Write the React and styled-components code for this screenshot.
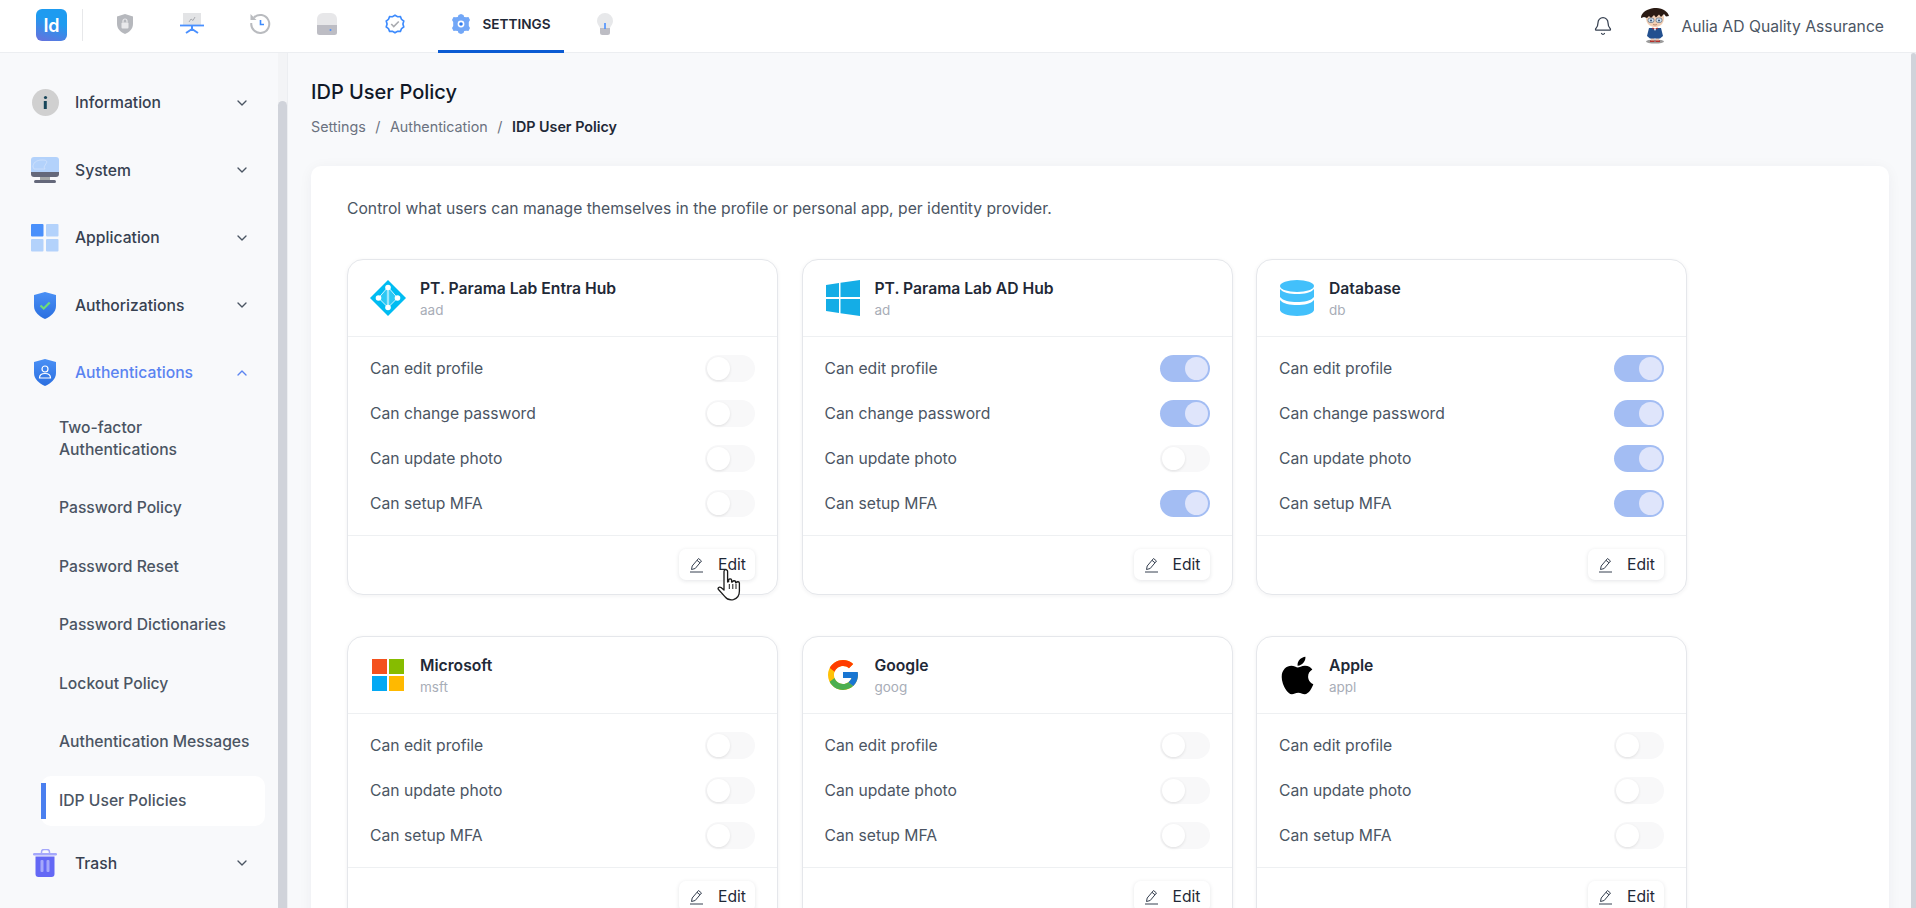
import React from "react";
import styled, { createGlobalStyle } from "styled-components";
import { Bell, ChevronDown, ChevronUp } from "lucide-react";
import { FcGoogle } from "react-icons/fc";
import { FaApple } from "react-icons/fa";

const GlobalStyle = createGlobalStyle`
  html, body {
    margin: 0;
    padding: 0;
    height: 100%;
    overflow: hidden;
    background: #f8f9fb;
    font-family: Inter, "Noto Sans", sans-serif;
  }
  * { box-sizing: border-box; }
`;

const Page = styled.div`
  width: 1916px;
  height: 908px;
  display: flex;
  flex-direction: column;
  overflow: hidden;
`;

/* top bar */
const TopBar = styled.header`
  height: 53px;
  flex: none;
  background: #fff;
  border-bottom: 1px solid #eceef1;
  display: flex;
  align-items: flex-start;
  padding-left: 36px;
`;

const Logo = styled.div`
  width: 31px;
  height: 32px;
  margin-top: 9px;
  border-radius: 6px;
  background: linear-gradient(200deg, #1e9bf0 40%, #6a6fdc 100%);
  color: #fff;
  font-size: 18px;
  font-weight: 600;
  display: flex;
  align-items: center;
  justify-content: center;
`;

const Divider = styled.div`
  width: 1px;
  height: 32px;
  margin: 9px 8px 0 15px;
  background: #e7e8ea;
`;

const TopIcon = styled.div`
  width: 67.5px;
  height: 52px;
  display: flex;
  align-items: center;
  justify-content: center;
  padding-bottom: 4px;
`;

const TopTab = styled.div`
  width: 126px;
  height: 53px;
  margin: 0 8px 0 9px;
  padding: 0 0 3px 14px;
  border-bottom: 3px solid #0b5bd3;
  display: flex;
  align-items: center;
  gap: 13px;
  font-size: 13.6px;
  font-weight: 600;
  color: #1f2937;
`;

const TopRight = styled.div`
  margin-left: auto;
  height: 52px;
  padding-right: 32px;
  display: flex;
  align-items: center;
  color: #374151;
`;

const UserName = styled.span`
  margin-left: 11px;
  font-size: 15.7px;
  color: #4b5563;
`;

const AvatarWrap = styled.div`
  margin-left: 27px;
  width: 30px;
  height: 36px;
`;

/* body */
const Body = styled.div`
  flex: 1;
  min-height: 0;
  display: flex;
`;

const Sidebar = styled.aside`
  width: 278px;
  flex: none;
  padding: 16px 13px 0 0;
  background: #f8f9fb;
`;

const ScrollTrack = styled.div`
  width: ${(p) => p.$width}px;
  flex: none;
  background: #f3f4f6;
  padding-top: ${(p) => p.$offset}px;
  border-right: ${(p) => (p.$edge ? "1px solid #eceef1" : "0")};
`;

const ScrollThumb = styled.div`
  height: 100%;
  background: #d0d3da;
  border-radius: 5px 5px 0 0;
`;

const NavRow = styled.div`
  height: 67.5px;
  padding-left: 31px;
  display: flex;
  align-items: center;
  font-size: 15.7px;
  font-weight: 500;
  color: ${(p) => (p.$active ? "#5b84f1" : "#374151")};
  margin-top: ${(p) => p.$top || 0}px;
`;

const NavIcon = styled.div`
  width: 28px;
  height: 28px;
  margin-right: 16px;
  display: flex;
  align-items: center;
  justify-content: center;
`;

const NavChevron = styled.div`
  margin-left: auto;
  margin-right: 15px;
  display: flex;
  color: ${(p) => (p.$active ? "#5b84f1" : "#4b5563")};
`;

const SubMenu = styled.div`
  margin: -4px 0 0 41px;
  display: flex;
  flex-direction: column;
  gap: 8.5px;
`;

const SubItem = styled.div`
  position: relative;
  padding: 14px 0 14px 18px;
  font-size: 15.7px;
  line-height: 22px;
  font-weight: 500;
  white-space: pre;
  color: #4b5563;
  border-radius: 10px;
  background: ${(p) => (p.$active ? "#fff" : "transparent")};
  ${(p) =>
    p.$active &&
    `&::before {
      content: "";
      position: absolute;
      left: 0;
      top: 7px;
      bottom: 7px;
      width: 5px;
      background: #4a7fef;
    }`}
`;

/* main */
const Main = styled.main`
  flex: 1;
  min-width: 0;
  padding: 26px 22px 0 23px;
  overflow: hidden;
`;

const Title = styled.h1`
  margin: 0;
  font-size: 20px;
  line-height: 27px;
  font-weight: 500;
  color: #111827;
`;

const Crumbs = styled.div`
  margin-top: 11px;
  display: flex;
  gap: 9.5px;
  font-size: 14.3px;
  line-height: 20px;
  color: #6b7280;
`;

const CrumbNow = styled.span`
  font-weight: 600;
  color: #1f2937;
`;

const Panel = styled.section`
  margin-top: 29px;
  padding: 32px 36px 0;
  background: #fff;
  border-radius: 10px;
  box-shadow: 0 2px 14px rgba(30, 41, 59, 0.05);
`;

const Lead = styled.p`
  margin: 0 0 39px;
  font-size: 15.7px;
  line-height: 22px;
  color: #4b5563;
`;

const CardGrid = styled.div`
  display: grid;
  grid-template-columns: repeat(3, 431px);
  column-gap: 23.5px;
  row-gap: 41px;
`;

const Card = styled.article`
  border: 1px solid #e5e7eb;
  border-radius: 16px;
  background: #fff;
  box-shadow: 0 1px 4px rgba(30, 41, 59, 0.06);
`;

const CardHead = styled.div`
  height: 77px;
  padding: 0 22px;
  display: flex;
  align-items: center;
  gap: 14px;
  border-bottom: 1px solid #eef0f2;
`;

const LogoBox = styled.div`
  width: 36px;
  height: 36px;
  flex: none;
  display: flex;
  align-items: center;
  justify-content: center;

  svg {
    flex: none;
  }
`;

const CardText = styled.div`
  padding-top: 1px;
`;

const CardName = styled.div`
  font-size: 15.7px;
  line-height: 20px;
  font-weight: 600;
  color: #1f2937;
`;

const CardKey = styled.div`
  margin-top: 2px;
  font-size: 13.5px;
  line-height: 18px;
  color: #a8adb7;
`;

const Rows = styled.div`
  padding: 18px 22px;
  display: flex;
  flex-direction: column;
  gap: 18px;
  border-bottom: 1px solid #eef0f2;
`;

const Row = styled.div`
  height: 27px;
  display: flex;
  align-items: center;
  justify-content: space-between;
  font-size: 15.7px;
  color: #4b5563;
`;

const Toggle = styled.div`
  width: 50px;
  height: 27px;
  border-radius: 14px;
  padding: 2px;
  display: flex;
  justify-content: ${(p) => (p.$on ? "flex-end" : "flex-start")};
  background: ${(p) => (p.$on ? "#a3bdf3" : "#f8f8f9")};
`;

const Knob = styled.div`
  width: 23px;
  height: 23px;
  border-radius: 50%;
  background: ${(p) => (p.$on ? "#dfe5fb" : "#fff")};
  box-shadow: ${(p) => (p.$on ? "none" : "0 1px 3px rgba(0,0,0,0.1)")};
`;

const CardFoot = styled.div`
  padding: 13px 22px 14px;
  display: flex;
  justify-content: flex-end;
`;

const EditButton = styled.button`
  position: relative;
  width: 76px;
  height: 31px;
  padding: 0 9px 0 10px;
  border: 0;
  border-radius: 7px;
  background: #fff;
  box-shadow: 0 1px 4px rgba(30, 41, 59, 0.12);
  font-family: inherit;
  font-size: 15.7px;
  color: #1f2937;
  display: flex;
  align-items: center;
  justify-content: space-between;
`;

const HandCursor = styled.svg`
  position: absolute;
  left: 38px;
  top: 20px;
`;

/* drawings */
const GrayShield = () => (
  <svg width="18" height="20" viewBox="0 0 18 20">
    <path d="M9 0l8 2.500V10c0 5-4 8.500-8 10-4-1.500-8-5-8-10V2.500z" fill="#b6b8bd" />
    <rect x="5.500" y="8.500" width="7" height="6" rx="1" fill="#e9e9eb" />
    <path d="M7 8.500V7a2 2 0 0 1 4 0v1.500" fill="none" stroke="#e9e9eb" strokeWidth="1.200" />
  </svg>
);

const BoardIcon = () => (
  <svg width="24" height="22" viewBox="0 0 24 22">
    <rect x="3" y="0" width="18" height="12" fill="#e3e4e6" />
    <path d="M9 9l2-3 2 1.500L15 4" fill="none" stroke="#a9abb0" strokeWidth="1" />
    <path d="M0 12.500h24" stroke="#4a90ff" strokeWidth="1.800" />
    <path d="M12 13v5M12 16l-6 4M12 16l6 4" stroke="#4a90ff" strokeWidth="2" fill="none" />
  </svg>
);

const HistoryIcon = () => (
  <svg width="22" height="22" viewBox="0 0 22 22">
    <path d="M5 4.500A9 9 0 1 1 2.300 10" fill="none" stroke="#b9bbbf" strokeWidth="2" />
    <path d="M1.500 1v6h6z" fill="#b9bbbf" />
    <path d="M11.500 7v4.500H15" fill="none" stroke="#3d8bfd" strokeWidth="1.600" />
  </svg>
);

const DriveIcon = () => (
  <svg width="20" height="22" viewBox="0 0 20 22">
    <path d="M0 12V6a6 6 0 0 1 6-6h8a6 6 0 0 1 6 6v6z" fill="#e7e7e9" />
    <path d="M0 12h20v7.500a2.500 2.500 0 0 1-2.500 2.500h-15A2.500 2.500 0 0 1 0 19.500z" fill="#bdbdc4" />
    <circle cx="13.500" cy="17" r="1" fill="#4a90ff" />
  </svg>
);

const BadgeIcon = () => (
  <svg width="20" height="20" viewBox="0 0 24 24">
    <path d="M12 1.500l3 1.800 3.500-.2 1.300 3.300 2.700 2.200-1 3.400 1 3.400-2.700 2.200-1.300 3.300-3.500-.2-3 1.800-3-1.800-3.500.2-1.300-3.300L1.500 15.400l1-3.400-1-3.400 2.700-2.200 1.300-3.300 3.500.2z" fill="none" stroke="#3d8bfd" strokeWidth="2" />
    <path d="M7.500 12l3 3 6-6" fill="none" stroke="#a9abb0" strokeWidth="2" />
  </svg>
);

const GearIcon = () => (
  <svg width="18" height="20" viewBox="0 0 18 20">
    <path d="M9 0l2.500 1 .7 2 2.300.3 2-.3 1.500 3-1.200 2v4l1.200 2-1.500 3-2-.3-2.300.3-.7 2L9 20l-2.500-1-.7-2-2.300-.3-2 .3L0 14l1.200-2V8L0 6l1.500-3 2 .3 2.300-.3.700-2z" fill="#72a7f7" />
    <circle cx="9" cy="10" r="3.400" fill="#fff" />
    <circle cx="9" cy="10" r="1.800" fill="#2f7cf0" />
  </svg>
);

const BulbIcon = () => (
  <svg width="16" height="22" viewBox="0 0 16 22">
    <path d="M8 0a8 8 0 0 1 8 8c0 3-2 4.500-3 7H3C2 12.500 0 11 0 8a8 8 0 0 1 8-8z" fill="#e7e8ea" />
    <path d="M3 15h10v4.500a2.500 2.500 0 0 1-2.500 2.500h-5A2.500 2.500 0 0 1 3 19.500z" fill="#bdbdc4" />
    <rect x="7.200" y="10" width="1.600" height="6" fill="#4a90ff" />
  </svg>
);

const Avatar = () => (
  <svg width="30" height="36" viewBox="0 0 30 36">
    <ellipse cx="15" cy="33.500" rx="9" ry="2" fill="#9b9b9b" />
    <path d="M11 30h3v3h-3zM16 30h3v3h-3z" fill="#e7c9b4" />
    <path d="M10 32.500h4.500v1.500H10zM15.500 32.500H20v1.500h-4.500z" fill="#b3312c" />
    <path d="M9 20h12l2 8-3 2.500H10L7 28z" fill="#23508f" />
    <path d="M13 19h4l-2 4z" fill="#fff" />
    <path d="M12.500 19.500l2.500 1 2.500-1v2l-2.500-1-2.500 1z" fill="#c3342b" />
    <path d="M6 10c0-5 4-8 9-8s9 3 9 8-3.500 9-9 9-9-4-9-9z" fill="#f3cfb4" />
    <path d="M1 9C2 4 7 1 14 0c7-.5 14 3 15 8l-3 .5-2-2.500-3 3-2-2.500-3 3-2-2.500-3 3-2-2-2 2-3-1-3 1z" fill="#2b1b14" />
    <rect x="8" y="10" width="6" height="4.500" rx="2" fill="#cfe0ee" stroke="#5f6f7f" strokeWidth="0.700" />
    <rect x="16" y="10" width="6" height="4.500" rx="2" fill="#cfe0ee" stroke="#5f6f7f" strokeWidth="0.700" />
    <circle cx="11" cy="12.500" r="1" fill="#33507a" />
    <circle cx="19" cy="12.500" r="1" fill="#33507a" />
    <path d="M13 16.500q2 1 4 0" fill="none" stroke="#a06a50" strokeWidth="0.700" />
  </svg>
);

const InfoIcon = () => (
  <svg width="27" height="27" viewBox="0 0 27 27">
    <circle cx="13.500" cy="13.500" r="13.500" fill="#d0d0d0" />
    <circle cx="13.500" cy="8.500" r="1.600" fill="#17465a" />
    <path d="M11.800 12h3v8h-3z" fill="#17465a" />
  </svg>
);

const SystemIcon = () => (
  <svg width="28" height="27" viewBox="0 0 28 27">
    <path d="M0 15V3a3 3 0 0 1 3-3h22a3 3 0 0 1 3 3v12z" fill="#b3d2fb" />
    <path d="M2 10c0-4 3-7 9-7 3 0 4 0 5 2l-3 5 1 2H3z" fill="none" stroke="#d4e4fc" strokeWidth="0.700" />
    <path d="M0 15h28v2a3 3 0 0 1-3 3H3a3 3 0 0 1-3-3z" fill="#64687a" />
    <rect x="9" y="20" width="10" height="3" fill="#a5a8a8" />
    <rect x="3" y="23" width="22" height="3" rx="1.500" fill="#64687a" />
  </svg>
);

const AppIcon = () => (
  <svg width="28" height="28" viewBox="0 0 28 28">
    <rect width="12.500" height="12.500" rx="1" fill="#4a90fb" />
    <rect x="15" width="12.500" height="12.500" rx="1" fill="#b3d2fb" />
    <rect y="15" width="12.500" height="12.500" rx="1" fill="#b3d2fb" />
    <rect x="15" y="15" width="12.500" height="12.500" rx="1" fill="#b3d2fb" />
  </svg>
);

const BlueShield = ({ children }) => (
  <svg width="22" height="27" viewBox="0 0 22 27">
    <defs>
      <linearGradient id="sh" x1="0" y1="0" x2="0" y2="1">
        <stop offset="0" stopColor="#4a90f5" />
        <stop offset="1" stopColor="#2b6fe0" />
      </linearGradient>
    </defs>
    <path d="M11 0l11 3v11c0 6-5 10.500-11 13C5 24.500 0 20 0 14V3z" fill="url(#sh)" />
    {children}
  </svg>
);

const TrashIcon = () => (
  <svg width="25" height="28" viewBox="0 0 25 28">
    <path d="M8.500 4V3a2.500 2.500 0 0 1 2.500-2.500h3A2.500 2.500 0 0 1 16.500 3v1" fill="none" stroke="#a5a8fb" strokeWidth="1.500" />
    <rect y="4" width="24" height="2.500" rx="1.200" fill="#a5a8fb" />
    <path d="M2.500 7.500h19V25a3 3 0 0 1-3 3h-13a3 3 0 0 1-3-3z" fill="#6468f5" />
    <rect x="7.500" y="11" width="3" height="12" rx="1" fill="#a5a8fb" />
    <rect x="13.500" y="11" width="3" height="12" rx="1" fill="#a5a8fb" />
  </svg>
);

const PencilIcon = () => (
  <svg width="15" height="16" viewBox="0 0 15 16" fill="none" stroke="#374151" strokeWidth="1">
    <path d="M2.500 12.500l.7-3.500L9.500 1.500l3 2.500-6.300 7.500z" />
    <path d="M8 3.300l3 2.500" />
    <path d="M1 15h13" />
  </svg>
);

const AzureLogo = () => (
  <svg width="36" height="36" viewBox="0 0 36 36">
    <path d="M18 0l18 18-18 18L0 18z" fill="#00bcf2" />
    <path d="M18 7L8.500 18 18 27.500 27.500 18z" fill="#2cc8f4" />
    <path d="M18 7L8.500 18 18 27.500 27.500 18z" stroke="#fff" strokeWidth="0.800" fill="none" />
    <path d="M18 7v20.500" stroke="#9be6fa" strokeWidth="2.400" fill="none" />
    <circle cx="18" cy="7.500" r="2.800" fill="#fff" />
    <circle cx="8.500" cy="18" r="2.800" fill="#fff" />
    <circle cx="27.500" cy="18" r="2.800" fill="#fff" />
    <circle cx="18" cy="27.500" r="2.800" fill="#fff" />
  </svg>
);

const WindowsLogo = () => (
  <svg width="34" height="36" viewBox="0 0 34 36">
    <path d="M0 5l13-2v14H0zM14.500 2.800L34 0v17H14.500zM0 19h13v14L0 31zM14.500 19H34v17l-19.500-2.800z" fill="#14ade6" />
  </svg>
);

const DatabaseLogo = () => (
  <svg width="34" height="36" viewBox="0 0 34 36">
    <ellipse cx="17" cy="6" rx="17" ry="6" fill="#42c0fb" />
    <path d="M0 9c3 4 10 5 17 5s14-1 17-5v8c-3 4-10 5-17 5S3 21 0 17z" fill="#42c0fb" />
    <path d="M0 20c3 4 10 5 17 5s14-1 17-5v10c0 3-8 6-17 6S0 33 0 30z" fill="#42c0fb" />
  </svg>
);

const MicrosoftLogo = () => (
  <svg width="32" height="32" viewBox="0 0 32 32">
    <rect width="15" height="15" fill="#f4511e" />
    <rect x="17" width="15" height="15" fill="#86bc00" />
    <rect y="17" width="15" height="15" fill="#03a9f4" />
    <rect x="17" y="17" width="15" height="15" fill="#ffb900" />
  </svg>
);

const HandPointer = () => (
  <HandCursor width="24" height="32" viewBox="0 0 24 32">
    <path
      d="M7 2.500a1.800 1.800 0 0 1 3.600 0V13l1-.3V11a1.600 1.600 0 0 1 3 0v2l1-.2a1.600 1.600 0 0 1 3 0v1l.8-.2a1.600 1.600 0 0 1 3 .5v8c0 4-2 7.500-6 8.500-4 .8-6.500-.2-8.500-3L1.500 20.500c-1.200-1.500.8-3.200 2.500-2l3 2.500z"
      fill="#fff"
      stroke="#1b1b1b"
      strokeWidth="1.300"
      strokeLinejoin="round"
    />
    <path d="M12.300 15v5M15.800 15v5M19 15v5" stroke="#1b1b1b" strokeWidth="1" />
  </HandCursor>
);

const navBefore = [
  { label: "Information", icon: <InfoIcon /> },
  { label: "System", icon: <SystemIcon /> },
  { label: "Application", icon: <AppIcon /> },
  {
    label: "Authorizations",
    icon: (
      <BlueShield>
        <path d="M6.500 13.500l3.200 3 6-6" fill="none" stroke="#6fdc78" strokeWidth="2.200" />
      </BlueShield>
    ),
  },
];

const subItems = [
  "Two-factor\nAuthentications",
  "Password Policy",
  "Password Reset",
  "Password Dictionaries",
  "Lockout Policy",
  "Authentication Messages",
];

const full = ["Can edit profile", "Can change password", "Can update photo", "Can setup MFA"];
const short = ["Can edit profile", "Can update photo", "Can setup MFA"];

const cards = [
  { name: "PT. Parama Lab Entra Hub", key: "aad", logo: <AzureLogo />, rows: full, on: [], hand: true },
  { name: "PT. Parama Lab AD Hub", key: "ad", logo: <WindowsLogo />, rows: full, on: [0, 1, 3] },
  { name: "Database", key: "db", logo: <DatabaseLogo />, rows: full, on: [0, 1, 2, 3] },
  { name: "Microsoft", key: "msft", logo: <MicrosoftLogo />, rows: short, on: [] },
  { name: "Google", key: "goog", logo: <FcGoogle size={36} />, rows: short, on: [] },
  { name: "Apple", key: "appl", logo: <FaApple size={43} color="#000" />, rows: short, on: [] },
];

function PolicyCard({ card }) {
  return (
    <Card>
      <CardHead>
        <LogoBox>{card.logo}</LogoBox>
        <CardText>
          <CardName>{card.name}</CardName>
          <CardKey>{card.key}</CardKey>
        </CardText>
      </CardHead>
      <Rows>
        {card.rows.map((label, i) => {
          const on = card.on.includes(i);
          return (
            <Row key={label}>
              {label}
              <Toggle $on={on}>
                <Knob $on={on} />
              </Toggle>
            </Row>
          );
        })}
      </Rows>
      <CardFoot>
        <EditButton>
          <PencilIcon />
          Edit
          {card.hand && <HandPointer />}
        </EditButton>
      </CardFoot>
    </Card>
  );
}

function App() {
  return (
    <Page>
      <GlobalStyle />
      <TopBar>
        <Logo>Id</Logo>
        <Divider />
        <TopIcon><GrayShield /></TopIcon>
        <TopIcon><BoardIcon /></TopIcon>
        <TopIcon><HistoryIcon /></TopIcon>
        <TopIcon><DriveIcon /></TopIcon>
        <TopIcon><BadgeIcon /></TopIcon>
        <TopTab>
          <GearIcon />
          SETTINGS
        </TopTab>
        <TopIcon><BulbIcon /></TopIcon>
        <TopRight>
          <Bell size={20} strokeWidth={1.5} />
          <AvatarWrap><Avatar /></AvatarWrap>
          <UserName>Aulia AD Quality Assurance</UserName>
        </TopRight>
      </TopBar>
      <Body>
        <Sidebar>
          {navBefore.map((item) => (
            <NavRow key={item.label}>
              <NavIcon>{item.icon}</NavIcon>
              {item.label}
              <NavChevron><ChevronDown size={16} /></NavChevron>
            </NavRow>
          ))}
          <NavRow $active>
            <NavIcon>
              <BlueShield>
                <circle cx="11" cy="10" r="3" fill="none" stroke="#fff" strokeWidth="1.200" />
                <path d="M5.500 19c0-3 2.500-4.500 5.500-4.500s5.500 1.500 5.500 4.500z" fill="none" stroke="#fff" strokeWidth="1.200" />
              </BlueShield>
            </NavIcon>
            Authentications
            <NavChevron $active><ChevronUp size={16} /></NavChevron>
          </NavRow>
          <SubMenu>
            {subItems.map((label) => (
              <SubItem key={label}>{label}</SubItem>
            ))}
            <SubItem $active>IDP User Policies</SubItem>
          </SubMenu>
          <NavRow $top={4}>
            <NavIcon><TrashIcon /></NavIcon>
            Trash
            <NavChevron><ChevronDown size={16} /></NavChevron>
          </NavRow>
        </Sidebar>
        <ScrollTrack $width={10} $offset={48} $edge>
          <ScrollThumb />
        </ScrollTrack>
        <Main>
          <Title>IDP User Policy</Title>
          <Crumbs>
            <span>Settings</span>
            <span>/</span>
            <span>Authentication</span>
            <span>/</span>
            <CrumbNow>IDP User Policy</CrumbNow>
          </Crumbs>
          <Panel>
            <Lead>Control what users can manage themselves in the profile or personal app, per identity provider.</Lead>
            <CardGrid>
              {cards.map((card) => (
                <PolicyCard key={card.key} card={card} />
              ))}
            </CardGrid>
          </Panel>
        </Main>
        <ScrollTrack $width={5} $offset={0}>
          <ScrollThumb />
        </ScrollTrack>
      </Body>
    </Page>
  );
}

export default App;
